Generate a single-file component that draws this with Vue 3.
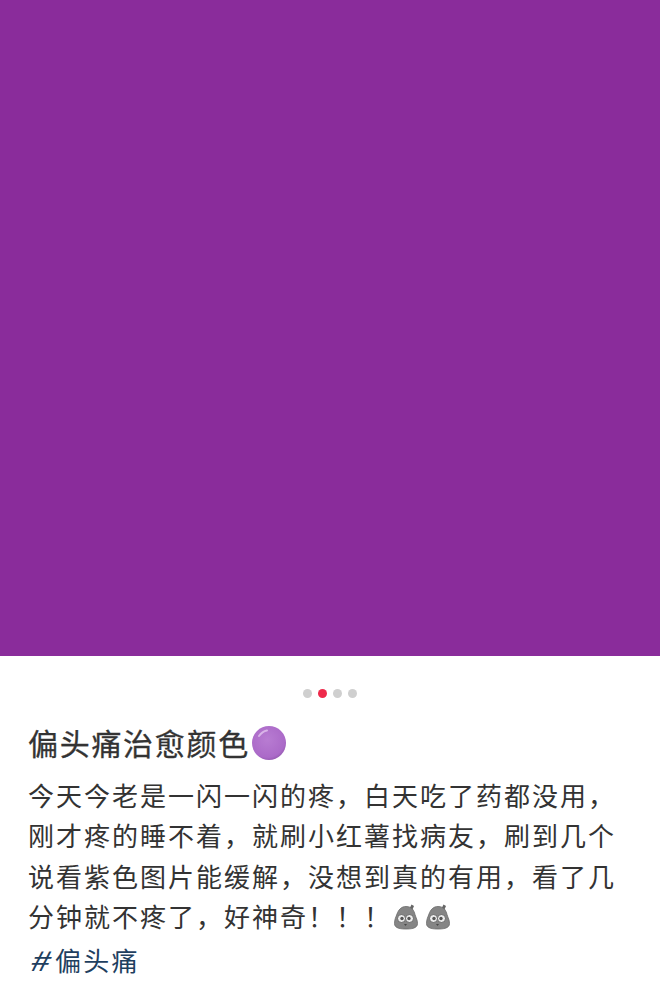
<script setup>
const dots = [false, true, false, false]
const lines = [
  '今天今老是一闪一闪的疼，白天吃了药都没用，',
  '刚才疼的睡不着，就刷小红薯找病友，刷到几个',
  '说看紫色图片能缓解，没想到真的有用，看了几',
]
</script>

<template>
  <main class="page">
    <div class="cover"></div>
    <div class="dots">
      <span v-for="(on, i) in dots" :key="i" class="dot" :class="{ on }"></span>
    </div>
    <section class="content">
      <h1 class="title">
        <span>偏头痛治愈颜色</span>
        <svg class="ball" viewBox="0 0 36 36" width="36" height="36" aria-hidden="true">
          <defs>
            <radialGradient id="g" cx="45%" cy="40%" r="65%">
              <stop offset="0" stop-color="#b87cd2" />
              <stop offset="0.8" stop-color="#ab6ac8" />
              <stop offset="1" stop-color="#8f55ab" />
            </radialGradient>
          </defs>
          <circle cx="18" cy="18" r="17" fill="url(#g)" />
          <path d="M8 11c2-3 5-5 8-5.500" fill="none" stroke="#d9b4e8" stroke-width="2" stroke-linecap="round" />
        </svg>
      </h1>
      <p class="body">
        <span v-for="l in lines" :key="l" class="line">{{ l }}</span>
        <span class="line last">
          <span>分钟就不疼了，好神奇！！！</span>
          <svg v-for="n in 2" :key="n" class="blob" viewBox="0 0 24 26" width="24" height="26" aria-hidden="true">
            <path d="M12 2.500C18 2.500 20 6.500 21 10.500 22 14 23.500 16 23.500 19.500 23.500 24.500 17 25 12 25S.5 24.500 .5 19.500C.5 15 2 13 3 10 4.500 6 7 2.500 12 2.500Z" fill="#858585" stroke="#6a6a6a" stroke-width="0.800" />
            <path d="M16 3.500l1.500-3 2.500 1.500-1.500 3.500z" fill="#666" />
            <circle cx="7.500" cy="14.500" r="4" fill="#ececec" stroke="#555" stroke-width="0.800" />
            <circle cx="15.500" cy="14.500" r="4" fill="#ececec" stroke="#555" stroke-width="0.800" />
            <circle cx="8" cy="14.500" r="1.700" fill="#555" />
            <circle cx="15" cy="14.500" r="1.700" fill="#555" />
            <path d="M10 20h3l-1.500 2z" fill="#4a4a4a" />
          </svg>
        </span>
      </p>
      <p class="tag"><span class="hash">#</span>偏头痛</p>
    </section>
  </main>
</template>

<style scoped>
.page {
  width: 660px;
  height: 994px;
  overflow: hidden;
  background: #fff;
  font-family: "Noto Sans CJK SC", "Noto Sans", sans-serif;
}
.cover {
  height: 656px;
  background: #8a2c9b;
}
.dots {
  display: flex;
  justify-content: center;
  gap: 6px;
  padding-top: 33px;
  height: 9px;
}
.dot {
  width: 9px;
  height: 9px;
  border-radius: 50%;
  background: #cfcfcf;
}
.dot.on {
  background: #ee2a4b;
}
.content {
  padding: 0 28px;
  margin-top: 22px;
}
.title {
  display: flex;
  align-items: center;
  height: 44px;
  margin: 0;
  font-size: 30px;
  font-weight: 400;
  -webkit-text-stroke: 0.300px #333;
  letter-spacing: 1.700px;
  color: #333;
}
.ball {
  margin-left: 1px;
  transform: translateY(1px);
}
.body {
  margin: 11px 0 0;
  font-size: 26px;
  letter-spacing: 2px;
  color: #333;
}
.line {
  display: block;
  height: 40.300px;
  line-height: 40.300px;
  white-space: nowrap;
}
.last {
  display: flex;
  align-items: center;
}
.blob {
  margin-left: 8px;
  transform: translateY(1px);
}
.blob:first-of-type {
  margin-left: 2px;
}
.tag {
  margin: 4px 0 0;
  height: 40px;
  font-size: 26px;
  line-height: 40px;
  letter-spacing: 2.300px;
  color: #1f3f5f;
}
.hash {
  display: inline-block;
  width: 27px;
  font-size: 27px;
  line-height: 0;
  font-style: italic;
  letter-spacing: 0;
  transform: scaleX(1.350);
  transform-origin: left center;
}
</style>
